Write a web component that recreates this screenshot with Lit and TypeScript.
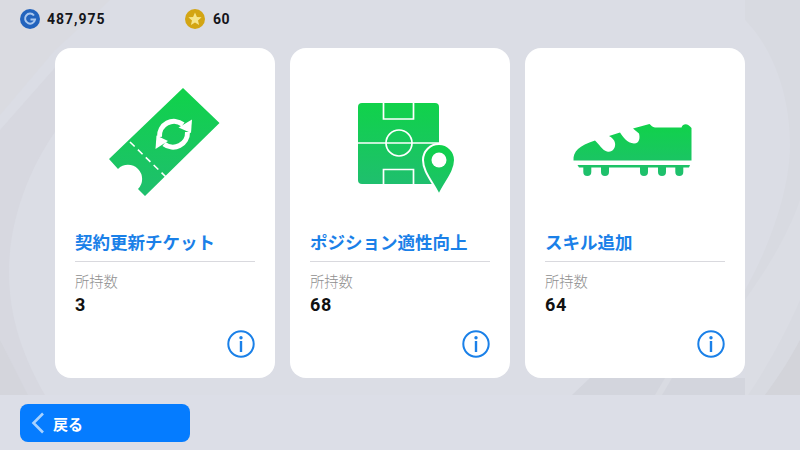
import { LitElement, html, css, svg } from "lit";
import { customElement } from "lit/decorators.js";

const defs = (id: string) => svg`<defs><linearGradient id=${id} x1="0" y1="0" x2="0" y2="1"><stop offset="0" stop-color="#10d24a"/><stop offset="1" stop-color="#1fbf6e"/></linearGradient></defs>`;

const ticket = html`<svg class="art" width="150" height="130" viewBox="0 0 150 130">${defs("g1")}
  <path d="M93 18 L129.500 53 L55 126 L48 119 A14 14 0 0 0 28 99 L19 89 Z" fill="url(#g1)"/>
  <path d="M40 72 L76 107" stroke="#fff" stroke-width="1.6" stroke-dasharray="6.5 4.5" fill="none"/>
  <path d="M69.500 67 A14.500 14.500 0 0 1 93 54.500" stroke="#fff" stroke-width="5" fill="none"/>
  <path d="M102 49.500 L101 63 L88.500 57.500 Z" fill="#fff"/>
  <path d="M97.500 62 A14.500 14.500 0 0 1 74 74" stroke="#fff" stroke-width="5" fill="none"/>
  <path d="M65.500 79 L66.500 65.500 L78 71 Z" fill="#fff"/>
</svg>`;

const pitch = html`<svg class="art pitch" width="130" height="120" viewBox="0 0 130 120">${defs("g2")}
  <rect x="18" y="18" width="81" height="81" rx="4" fill="url(#g2)"/>
  <g stroke="#fff" stroke-width="1.7" fill="none">
    <path d="M18 58 H99"/>
    <circle cx="59" cy="58" r="13"/>
    <path d="M43.500 18 V34 H73.500 V18"/>
    <path d="M43.500 99 V84.500 H73.500 V99"/>
  </g>
  <path d="M99 110 C93 97 83 87 83 75 A16 16 0 1 1 115 75 C115 87 105 97 99 110 Z" fill="url(#g2)" stroke="#fff" stroke-width="2"/>
  <circle cx="99" cy="75" r="7.500" fill="#fff"/>
</svg>`;

const stud = (cx: number) => `M${cx - 4} 57 V62 A4 4 0 0 0 ${cx + 4} 62 V57 Z`;
const shoe = html`<svg class="art shoe" width="150" height="80" viewBox="0 0 150 80">
  <defs><linearGradient id="g3" gradientUnits="userSpaceOnUse" x1="0" y1="14" x2="0" y2="66"><stop offset="0" stop-color="#10d24a"/><stop offset="1" stop-color="#1fbf6e"/></linearGradient></defs>
  <path d="M13.500 50.500 C13 41 19 36 35 30.500 C39 34 42 40 47 41.500 C52 43 56 38 55 33 C54.500 30 52 27.500 49 26 L60 22.500 C63 27 67 33 74 33.500 C80 33.500 80 27 79 23.500 L73 18.500 L89.500 14 C91 15 92.500 17.500 95 17.500 L121.500 17.500 C123 13 128 13 131.500 18 L131.500 50.500 Z" fill="url(#g3)"/>
  <path d="M17.500 55 H130 L129 57.500 H19 Z" fill="url(#g3)"/>
  <path d="${stud(27.3)} ${stud(45)} ${stud(84)} ${stud(102)} ${stud(119.3)}" fill="url(#g3)"/>
</svg>`;

const info = html`<svg class="info" width="28" height="28" viewBox="0 0 28 28">
  <circle cx="14" cy="14" r="12.700" fill="none" stroke="#1a80e8" stroke-width="2"/>
  <circle cx="14" cy="7.800" r="1.700" fill="#1a80e8"/>
  <rect x="12.800" y="11" width="2.400" height="11" fill="#1a80e8"/>
</svg>`;

@customElement("app-root")
export class AppRoot extends LitElement {
  static styles = css`
    :host { display: block; position: relative; width: 800px; height: 450px; overflow: hidden; background: #dcdee7; font-family: "Noto Sans CJK JP", "Noto Sans", sans-serif; }
    .bg { position: absolute; left: 0; top: 0; }
    .wrap { position: relative; display: flex; flex-direction: column; }
    .top { height: 38px; margin-bottom: 10px; padding-left: 20px; display: flex; align-items: center; }
    .cur { display: flex; align-items: center; gap: 7px; font: 700 14px Roboto, sans-serif; letter-spacing: 1px; color: #15151a; }
    .cur.a { width: 165px; }
    .cur.b { gap: 8px; letter-spacing: .55px; }
    .cards { display: flex; gap: 15px; padding-left: 55px; }
    .card { width: 220px; height: 330px; box-sizing: border-box; background: #fff; border-radius: 16px; padding: 0 20px; display: flex; flex-direction: column; }
    .icon { height: 174px; display: flex; align-items: center; justify-content: center; margin: 0 -20px; }
    .art { display: block; }
    .pitch { margin: 20px 0 0 10px; }
    .shoe { margin-top: 30px; }
    .title { height: 40px; border-bottom: 1px solid #d9d9de; font-size: 17.500px; line-height: 40px; font-weight: 700; color: #1a80e8; white-space: nowrap; box-sizing: border-box; }
    .label { margin-top: 9px; font-size: 14.300px; line-height: 20px; font-weight: 300; color: #8f8f8f; }
    .num { margin-top: 2px; font: 700 18px/24px Roboto, sans-serif; letter-spacing: .6px; color: #111; }
    .foot { margin-top: auto; display: flex; justify-content: flex-end; padding-bottom: 20px; }
    .info { display: block; }
    .back { margin: 26px 0 0 20px; width: 170px; height: 38px; border-radius: 8px; background: #057cff; display: flex; align-items: center; gap: 8px; padding-left: 11px; box-sizing: border-box; color: #fff; font-size: 15px; font-weight: 700; }
  `;

  card(art: unknown, title: string, n: string) {
    return html`<section class="card">
      <div class="icon">${art}</div>
      <div class="title">${title}</div>
      <div class="label">所持数</div>
      <div class="num">${n}</div>
      <div class="foot">${info}</div>
    </section>`;
  }

  render() {
    return html`
      <svg class="bg" width="800" height="450" viewBox="0 0 800 450">
        <path d="M0 0 H800 V395 H0 Z" fill="#dbdde5"/>
        <path d="M0 0 H110 L55 50 L0 115 Z" fill="#dadbe1"/>
        <path d="M0 130 L60 62 V125 C30 165 9 220 9 272 C9 320 25 360 45 395 H0 Z" fill="#d7d8e0"/>
        <path d="M0 340 L28 395 H0 Z" fill="#d4d5dc"/>
        <path d="M745 0 H800 V395 H745 V290 C765 255 790 195 790 145 C790 90 770 45 745 20 Z" fill="#d8dae1"/>
        <path d="M745 300 C770 265 790 230 800 200 V300 C785 335 765 370 748 395 H745 Z" fill="#dbdde4"/>
        <path d="M572 395 L590 378 H745 V395 Z" fill="#d3d5dd"/>
        <path d="M655 395 L665 378 H672 L662 395 Z" fill="#d9dbe2"/>
        <path d="M765 395 C780 375 792 355 800 340 V395 Z" fill="#d3d4da"/>
      </svg>
      <div class="wrap">
        <div class="top">
          <div class="cur a">
            <svg width="20" height="20" viewBox="0 0 20 20"><circle cx="10" cy="10" r="10" fill="#2263bd"/><path d="M14 6.500 A5 5 0 1 0 15 10.500 H10.500" fill="none" stroke="#a9c7ee" stroke-width="2"/></svg>
            <span>487,975</span>
          </div>
          <div class="cur b">
            <svg width="20" height="20" viewBox="0 0 20 20"><circle cx="10" cy="10" r="10" fill="#d3a514"/><path d="M10 3.500 L11.900 7.900 L16.600 8.300 L13 11.400 L14.100 16 L10 13.600 L5.900 16 L7 11.400 L3.400 8.300 L8.100 7.900 Z" fill="#f6e58c"/></svg>
            <span>60</span>
          </div>
        </div>
        <div class="cards">
          ${this.card(ticket, "契約更新チケット", "3")}
          ${this.card(pitch, "ポジション適性向上", "68")}
          ${this.card(shoe, "スキル追加", "64")}
        </div>
        <div class="back">
          <svg width="14" height="22" viewBox="0 0 14 22"><path d="M12 1.500 L2.500 11 L12 20.500" fill="none" stroke="#a8d2ff" stroke-width="2.600"/></svg>
          <span>戻る</span>
        </div>
      </div>
    `;
  }
}
